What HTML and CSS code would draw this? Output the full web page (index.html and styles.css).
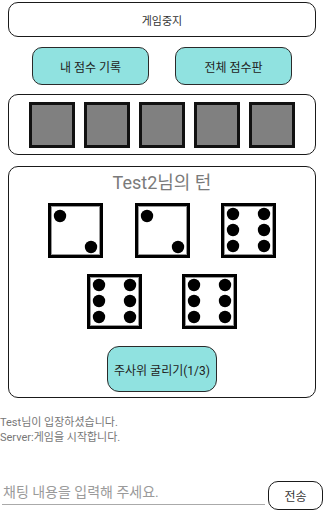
FILE: index.html
```html
<!DOCTYPE html>
<html lang="ko">
<head>
<meta charset="utf-8">
<title>게임</title>
<link rel="stylesheet" href="styles.css">
</head>
<body>
<div class="top-btn">게임중지</div>
<div class="score-row">
  <div class="teal-btn">내 점수 기록</div>
  <div class="teal-btn">전체 점수판</div>
</div>
<div class="held">
  <div class="slot"></div>
  <div class="slot"></div>
  <div class="slot"></div>
  <div class="slot"></div>
  <div class="slot"></div>
</div>
<div class="board">
  <div class="title">Test2님의 턴</div>
  <div class="dice-row row1">
    <svg class="die" width="55" height="55" viewBox="0 0 55 55"><rect x="1.5" y="1.5" width="52" height="52" fill="#fff" stroke="#000" stroke-width="3"/><rect x="3.5" y="3.5" width="48" height="48" fill="none" stroke="#999" stroke-width="1"/><circle cx="12" cy="13" r="6.2"/><circle cx="43" cy="44" r="6.2"/></svg>
    <svg class="die" width="55" height="55" viewBox="0 0 55 55"><rect x="1.5" y="1.5" width="52" height="52" fill="#fff" stroke="#000" stroke-width="3"/><rect x="3.5" y="3.5" width="48" height="48" fill="none" stroke="#999" stroke-width="1"/><circle cx="12" cy="13" r="6.2"/><circle cx="43" cy="44" r="6.2"/></svg>
    <svg class="die" width="55" height="55" viewBox="0 0 55 55"><rect x="1.5" y="1.5" width="52" height="52" fill="#fff" stroke="#000" stroke-width="3"/><rect x="3.5" y="3.5" width="48" height="48" fill="none" stroke="#999" stroke-width="1"/><circle cx="12" cy="11" r="6.2"/><circle cx="12" cy="27" r="6.2"/><circle cx="12" cy="43" r="6.2"/><circle cx="43" cy="11" r="6.2"/><circle cx="43" cy="27" r="6.2"/><circle cx="43" cy="43" r="6.2"/></svg>
  </div>
  <div class="dice-row row2">
    <svg class="die" width="55" height="55" viewBox="0 0 55 55"><rect x="1.5" y="1.5" width="52" height="52" fill="#fff" stroke="#000" stroke-width="3"/><rect x="3.5" y="3.5" width="48" height="48" fill="none" stroke="#999" stroke-width="1"/><circle cx="12" cy="11" r="6.2"/><circle cx="12" cy="27" r="6.2"/><circle cx="12" cy="43" r="6.2"/><circle cx="43" cy="11" r="6.2"/><circle cx="43" cy="27" r="6.2"/><circle cx="43" cy="43" r="6.2"/></svg>
    <svg class="die" width="55" height="55" viewBox="0 0 55 55"><rect x="1.5" y="1.5" width="52" height="52" fill="#fff" stroke="#000" stroke-width="3"/><rect x="3.5" y="3.5" width="48" height="48" fill="none" stroke="#999" stroke-width="1"/><circle cx="12" cy="11" r="6.2"/><circle cx="12" cy="27" r="6.2"/><circle cx="12" cy="43" r="6.2"/><circle cx="43" cy="11" r="6.2"/><circle cx="43" cy="27" r="6.2"/><circle cx="43" cy="43" r="6.2"/></svg>
  </div>
  <div class="roll-btn">주사위 굴리기(1/3)</div>
</div>
<div class="chat">
  <div class="msg">Test님이 입장하셨습니다.</div>
  <div class="msg">Server:게임을 시작합니다.</div>
</div>
<div class="input-row">
  <input class="chat-input" type="text" placeholder="채팅 내용을 입력해 주세요.">
  <div class="send-btn">전송</div>
</div>
</body>
</html>
```
FILE: styles.css
```css
* { box-sizing: border-box; }
html, body {
  margin: 0;
  padding: 0;
  background: #fff;
  width: 324px;
  height: 512px;
  overflow: hidden;
  font-family: Roboto, "Noto Sans CJK KR", sans-serif;
  color: #222;
}
.top-btn {
  margin: 2px 8px 0 8px;
  height: 35px;
  border: 1.5px solid #1a1a1a;
  border-radius: 10px;
  display: flex;
  align-items: center;
  justify-content: center;
  font-size: 11px;
  color: #333;
}
.score-row {
  display: flex;
  padding-left: 32px;
  gap: 26px;
  margin-top: 10px;
}
.teal-btn {
  width: 117px;
  height: 38px;
  background: #90e2e0;
  border: 1px solid #2a2a2a;
  border-radius: 10px;
  display: flex;
  align-items: center;
  justify-content: center;
  font-size: 12px;
  color: #222;
}
.held {
  margin: 9px 8px 0 8px;
  height: 61px;
  border: 1.5px solid #1a1a1a;
  border-radius: 10px;
  display: flex;
  align-items: center;
  justify-content: center;
  gap: 9px;
}
.slot {
  width: 46px;
  height: 46px;
  background: #808080;
  border: 3px solid #111;
}
.board {
  margin: 11px 8px 0 8px;
  height: 232px;
  border: 1.5px solid #1a1a1a;
  border-radius: 10px;
  display: flex;
  flex-direction: column;
  align-items: center;
  padding-top: 5px;
}
.title {
  font-size: 18px;
  line-height: 22px;
  color: #7a7a7a;
}
.dice-row {
  display: flex;
  justify-content: center;
}
.row1 { margin-top: 9px; gap: 31.5px; }
.row2 { margin-top: 16px; gap: 39.5px; }
.die { display: block; }
.roll-btn {
  margin-top: 17px;
  width: 110px;
  height: 46px;
  background: #90e2e0;
  border: 1px solid #2a2a2a;
  border-radius: 12px;
  display: flex;
  align-items: center;
  justify-content: center;
  font-size: 12px;
  color: #222;
}
.chat {
  margin-top: 17px;
}
.msg {
  font-size: 11px;
  line-height: 15px;
  color: #777;
}
.input-row {
  display: flex;
  align-items: flex-end;
  margin-top: 36px;
  height: 29px;
}
.chat-input {
  width: 263px;
  height: 26px;
  margin: 0 3px 5px 2px;
  padding: 0 1px;
  border: none;
  border-bottom: 1.5px solid #aaa;
  outline: none;
  background: transparent;
  font-family: Roboto, "Noto Sans CJK KR", sans-serif;
  font-size: 14px;
  color: #333;
}
.chat-input::placeholder {
  color: #9a9a9a;
}
.send-btn {
  width: 55px;
  height: 29px;
  border: 1.5px solid #1a1a1a;
  border-radius: 10px;
  display: flex;
  align-items: center;
  justify-content: center;
  font-size: 12px;
  color: #333;
}
```
